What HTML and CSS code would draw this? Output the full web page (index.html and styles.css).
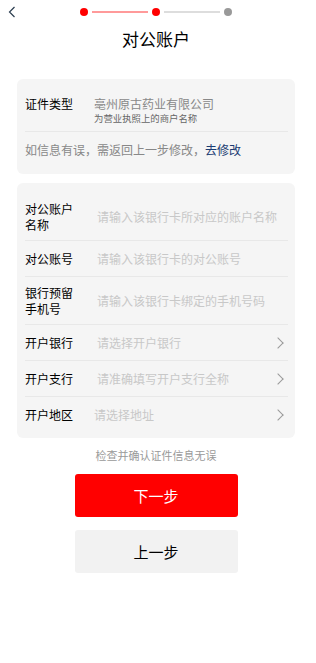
FILE: index.html
```html
<!DOCTYPE html>
<html lang="zh-CN">
<head>
    <meta charset="UTF-8">
    <meta name="viewport" content="width=device-width, initial-scale=1.0">
    <title>对公账户</title>
    <link rel="stylesheet" href="styles.css">
</head>
<body>
    <div class="page">
        <div class="topbar">
            <a class="back" href="#">
                <svg width="8" height="12" viewBox="0 0 8 12"><path d="M6.5 1 L1.5 6 L6.5 11" fill="none" stroke="#2c3e50" stroke-width="1.2"/></svg>
            </a>
            <div class="steps">
                <span class="dot on"></span>
                <span class="line on"></span>
                <span class="dot on"></span>
                <span class="line"></span>
                <span class="dot"></span>
            </div>
        </div>
        <h1 class="title">对公账户</h1>

        <div class="card">
            <div class="row info-row">
                <div class="label">证件类型</div>
                <div class="value">
                    <div class="company">亳州原古药业有限公司</div>
                    <div class="hint">为营业执照上的商户名称</div>
                </div>
            </div>
            <div class="row notice">如信息有误，需返回上一步修改，<a href="#">去修改</a></div>
        </div>

        <div class="card form-card">
            <div class="row two">
                <div class="label">对公账户<br>名称</div>
                <input class="field" type="text" placeholder="请输入该银行卡所对应的账户名称">
            </div>
            <div class="row">
                <div class="label">对公账号</div>
                <input class="field" type="text" placeholder="请输入该银行卡的对公账号">
            </div>
            <div class="row two">
                <div class="label">银行预留<br>手机号</div>
                <input class="field" type="text" placeholder="请输入该银行卡绑定的手机号码">
            </div>
            <div class="row">
                <div class="label">开户银行</div>
                <div class="field select">请选择开户银行</div>
                <span class="arrow"></span>
            </div>
            <div class="row">
                <div class="label">开户支行</div>
                <div class="field select">请准确填写开户支行全称</div>
                <span class="arrow"></span>
            </div>
            <div class="row">
                <div class="label short">开户地区</div>
                <div class="field select">请选择地址</div>
                <span class="arrow"></span>
            </div>
        </div>

        <p class="tip">检查并确认证件信息无误</p>
        <button class="btn primary">下一步</button>
        <button class="btn">上一步</button>
    </div>
</body>
</html>
```

FILE: styles.css
```css
body {
    margin: 0;
    padding: 0;
    background-color: #fff;
    font-family: "Noto Sans CJK SC", "Noto Sans", sans-serif;
    color: #000;
}

.page {
    width: 312px;
}

.topbar {
    position: relative;
    height: 24px;
}

.back {
    position: absolute;
    left: 8px;
    top: 6px;
    line-height: 0;
}

.steps {
    display: flex;
    align-items: center;
    justify-content: center;
    padding-top: 8px;
}

.dot {
    width: 8px;
    height: 8px;
    border-radius: 50%;
    background-color: #999;
}

.dot.on {
    background-color: #ff0000;
}

.line {
    width: 56px;
    height: 2px;
    margin: 0 4px;
    background-color: #ddd;
}

.line.on {
    background-color: #ff9a9a;
}

.title {
    margin: 2px 0 0;
    height: 25px;
    font-size: 17px;
    font-weight: normal;
    line-height: 25px;
    text-align: center;
}

.card {
    margin: 28px 17px 0;
    padding: 10px 7px 6px 8px;
    background-color: #f5f5f5;
    border-radius: 6px;
}

.row {
    display: flex;
    align-items: center;
    box-sizing: border-box;
    height: 36px;
    border-bottom: 1px solid #e8e8e8;
    font-size: 12px;
    line-height: 16px;
}

.row:last-child {
    border-bottom: none;
}

.label {
    width: 72px;
    flex-shrink: 0;
}

.info-row {
    align-items: flex-start;
    height: 43px;
    padding-top: 7px;
}

.info-row .label {
    width: 69px;
}

.company {
    height: 16px;
    color: #888;
}

.hint {
    height: 12px;
    font-size: 9.4px;
    line-height: 12px;
    color: #666;
}

.notice {
    color: #888;
}

.notice a {
    color: #1b3c73;
    text-decoration: none;
}

.form-card {
    margin-top: 9px;
    padding-top: 10px;
    padding-bottom: 5px;
}

.row.two {
    height: 48px;
}

.field {
    flex: 1;
    min-width: 0;
    height: 16px;
    border: none;
    padding: 0;
    background: transparent;
    font-family: inherit;
    font-size: 12px;
    line-height: 16px;
    color: #333;
    outline: none;
}

.field::placeholder {
    color: #c8c8c8;
}

.select {
    color: #c8c8c8;
}

.label.short {
    width: 69px;
}

.arrow {
    width: 7px;
    height: 7px;
    margin-right: 6px;
    border-top: 1px solid #999;
    border-right: 1px solid #999;
    transform: rotate(45deg);
}

.tip {
    margin: 9px 0 0;
    font-size: 11px;
    line-height: 16px;
    color: #999;
    text-align: center;
}

.btn {
    display: block;
    width: 163px;
    height: 43px;
    margin: 11px auto 0;
    border: none;
    border-radius: 3px;
    background-color: #f2f2f2;
    font-family: inherit;
    font-size: 15px;
    color: #000;
}

.btn.primary {
    background-color: #ff0000;
    color: #fff;
}

.btn.primary + .btn {
    margin-top: 13px;
}
```
